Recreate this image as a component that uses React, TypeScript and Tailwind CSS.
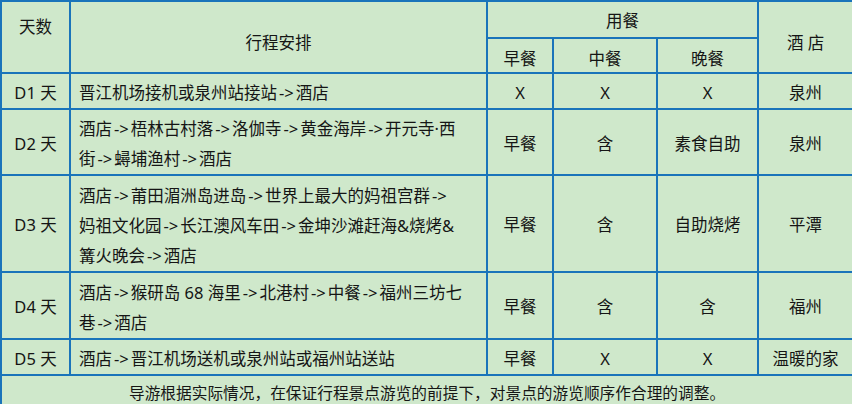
import React from 'react'

const font = { fontFamily: '"Noto Sans", "Noto Sans CJK SC", sans-serif' }

const cell = 'border-2 border-[#1a74ba] text-center align-middle pt-1'
const left = 'border-2 border-[#1a74ba] text-left align-middle px-2 pt-1 leading-[30px] whitespace-nowrap'

type Day = {
  day: string
  lines: string[]
  meals: [string, string, string]
  hotel: string
  h: string
}

const days: Day[] = [
  { day: 'D1 天', lines: ['晋江机场接机或泉州站接站->酒店'], meals: ['X', 'X', 'X'], hotel: '泉州', h: 'h-[35px]' },
  { day: 'D2 天', lines: ['酒店->梧林古村落->洛伽寺->黄金海岸->开元寺·西', '街->蟳埔渔村->酒店'], meals: ['早餐', '含', '素食自助'], hotel: '泉州', h: 'h-[65px]' },
  { day: 'D3 天', lines: ['酒店->莆田湄洲岛进岛->世界上最大的妈祖宫群->', '妈祖文化园->长江澳风车田->金坤沙滩赶海&烧烤&', '篝火晚会->酒店'], meals: ['早餐', '含', '自助烧烤'], hotel: '平潭', h: 'h-[97px]' },
  { day: 'D4 天', lines: ['酒店->猴研岛 68 海里->北港村->中餐->福州三坊七', '巷->酒店'], meals: ['早餐', '含', '含'], hotel: '福州', h: 'h-[67px]' },
  { day: 'D5 天', lines: ['酒店->晋江机场送机或泉州站或福州站送站'], meals: ['早餐', 'X', 'X'], hotel: '温暖的家', h: 'h-[33px]' },
]

function Line({ text }: { text: string }) {
  const parts = text.split('->')
  return (
    <div>
      {parts.map((p, i) => (
        <React.Fragment key={i}>
          {i > 0 && <span className="px-[2px]">-&gt;</span>}
          {p}
        </React.Fragment>
      ))}
    </div>
  )
}

export default function App() {
  return (
    <div className="w-[852px] h-[404px] bg-[#cfe8cb] text-[16.5px] text-[#151515]" style={font}>
      <table className="w-[852px] table-fixed border-collapse">
        <colgroup>
          <col className="w-[69px]" />
          <col className="w-[417px]" />
          <col className="w-[66px]" />
          <col className="w-[104px]" />
          <col className="w-[101px]" />
          <col className="w-[95px]" />
        </colgroup>
        <tbody>
          <tr className="h-[37px]">
            <td rowSpan={2} className="border-2 border-[#1a74ba] text-center align-top pt-[13px]">天数</td>
            <td rowSpan={2} className={cell + ' pt-3'}>行程安排</td>
            <td colSpan={3} className={cell}>用餐</td>
            <td rowSpan={2} className={cell + ' pt-3'}>酒 店</td>
          </tr>
          <tr className="h-[35px]">
            <td className={cell + ' pt-2'}>早餐</td>
            <td className={cell + ' pt-2'}>中餐</td>
            <td className={cell + ' pt-2'}>晚餐</td>
          </tr>
          {days.map((d) => (
            <tr key={d.day} className={d.h}>
              <td className={cell}>{d.day}</td>
              <td className={left}>
                {d.lines.map((l, i) => (
                  <Line key={i} text={l} />
                ))}
              </td>
              {d.meals.map((m, i) => (
                <td key={i} className={cell}>{m}</td>
              ))}
              <td className={cell}>{d.hotel}</td>
            </tr>
          ))}
          <tr className="h-[34px]">
            <td colSpan={6} className={cell + ' text-[15.7px]'}>
              导游根据实际情况，在保证行程景点游览的前提下，对景点的游览顺序作合理的调整。
            </td>
          </tr>
        </tbody>
      </table>
    </div>
  )
}
